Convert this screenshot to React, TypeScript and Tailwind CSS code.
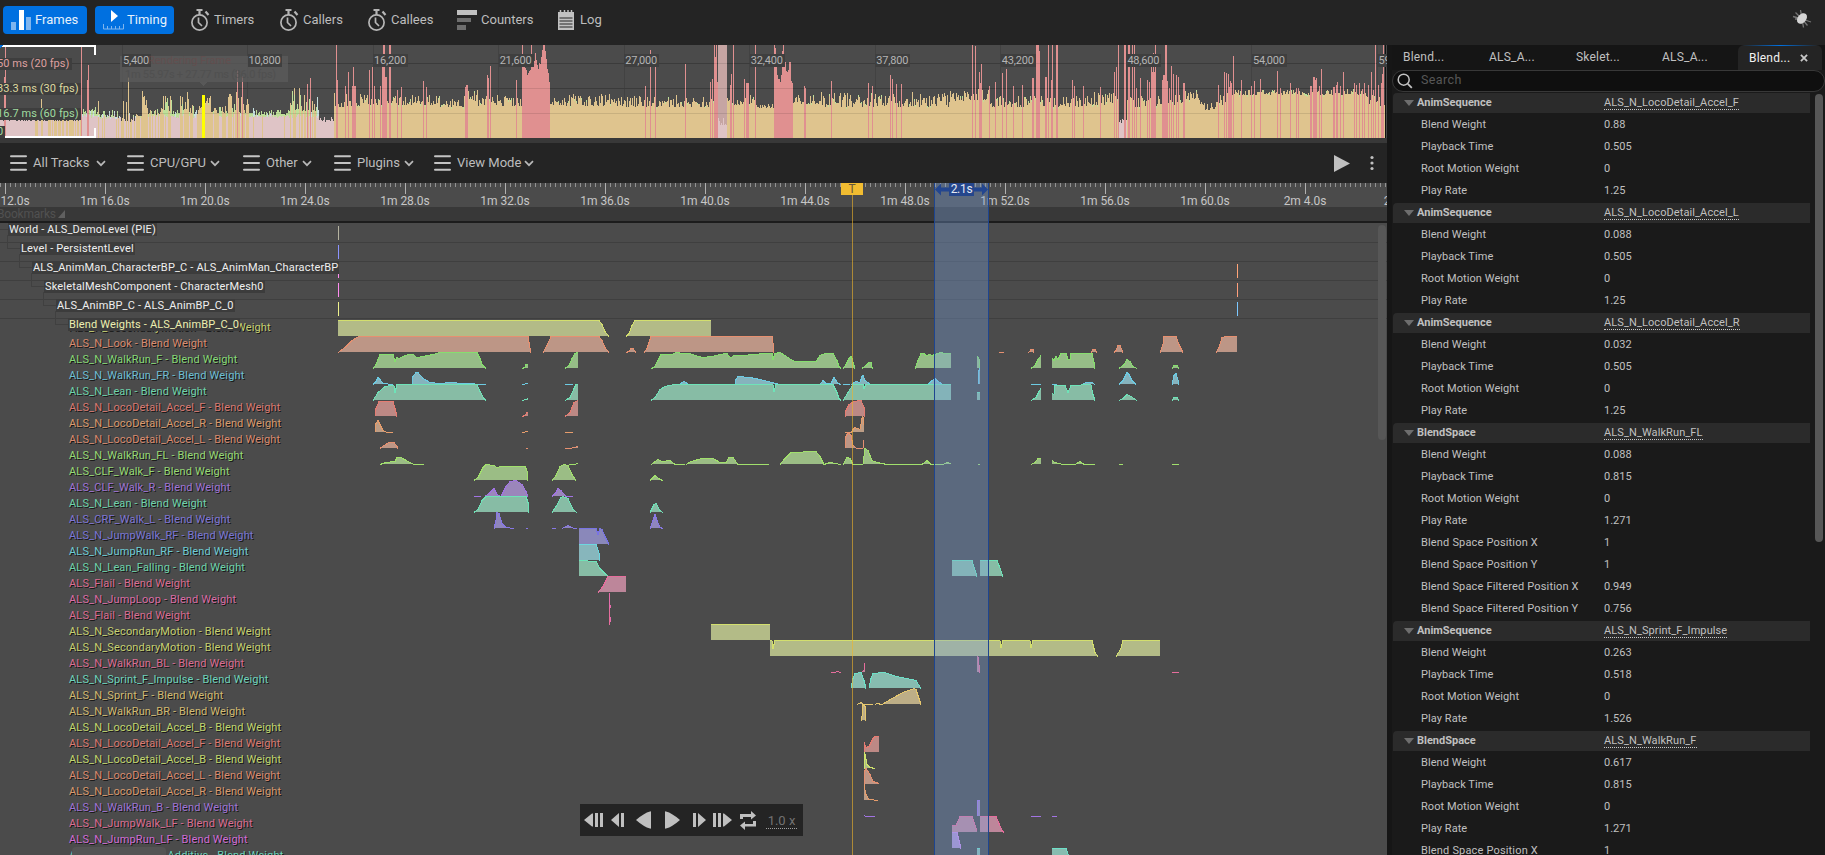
import React from "react";

/* ---------- frame graph ---------- */

const rnd = (n: number) => {
  const s = Math.sin(n * 127.1 + 11.7) * 43758.5453;
  return s - Math.floor(s);
};

const TAN = "#dfc48e";
const ROSE = "#e09090";
const MAUVE = "#dfc4c6";
const LIME = "#bfe09a";
const ICE = "#c6e0e0";

// [from, to, highest y, lowest y, kind]; y is measured from the top of the graph
type Zone = [number, number, number, number, "low" | "mix" | "green" | "tan"];
const zones: Zone[] = [
  [0, 34, 73, 76, "low"],
  [34, 82, 73, 76, "mix"],
  [82, 100, 62, 70, "green"],
  [100, 118, 65, 72, "green"],
  [118, 135, 68, 77, "mix"],
  [135, 142, 64, 71, "mix"],
  [142, 147, 46, 60, "tan"],
  [147, 161, 62, 70, "mix"],
  [161, 172, 50, 68, "mix"],
  [172, 180, 65, 69, "green"],
  [180, 190, 50, 67, "mix"],
  [190, 203, 60, 69, "mix"],
  [203, 211, 51, 58, "tan"],
  [211, 228, 60, 68, "mix"],
  [228, 232, 49, 54, "tan"],
  [232, 250, 52, 68, "mix"],
  [250, 289, 63, 70, "green"],
  [289, 306, 44, 66, "mix"],
  [306, 319, 52, 68, "mix"],
  [319, 334, 71, 77, "low"],
  [334, 345, 54, 62, "tan"],
  [345, 380, 48, 61, "tan"],
  [380, 440, 50, 60, "tan"],
  [440, 464, 53, 62, "tan"],
  [464, 478, 44, 56, "tan"],
  [478, 522, 50, 61, "tan"],
  [522, 560, 52, 60, "tan"],
  [560, 620, 48, 61, "tan"],
  [620, 718, 50, 62, "tan"],
  [718, 727, 72, 80, "low"],
  [727, 755, 50, 60, "tan"],
  [755, 774, 58, 63, "tan"],
  [774, 820, 50, 59, "tan"],
  [820, 950, 47, 62, "tan"],
  [950, 990, 43, 56, "tan"],
  [990, 1090, 50, 62, "tan"],
  [1090, 1119, 46, 60, "tan"],
  [1119, 1127, 68, 78, "low"],
  [1127, 1160, 50, 62, "tan"],
  [1160, 1185, 46, 60, "tan"],
  [1185, 1200, 44, 56, "tan"],
  [1200, 1218, 56, 65, "tan"],
  [1218, 1226, 50, 60, "tan"],
  [1226, 1366, 44, 50, "tan"],
  [1366, 1385, 50, 62, "tan"],
];

// [x, y, width]
const roseBars: [number, number, number][] = [
  [5, 0, 1], [4, 32, 1], [81, 2, 1], [88, 20, 1], [87, 35, 1],
  [237, 25, 1], [242, 31, 1], [310, 33, 1], [307, 39, 1],
  [336, 0, 1], [337, 35, 1], [345, 41, 1], [348, 27, 1], [352, 41, 4], [353, 22, 1],
  [369, 25, 1], [372, 22, 1], [374, 41, 1], [380, 41, 1], [382, 22, 1], [383, 0, 2], [385, 32, 2], [389, 0, 2],
  [397, 45, 1], [401, 42, 1], [423, 36, 1], [426, 42, 1], [465, 42, 1], [466, 40, 2], [487, 30, 1], [488, 33, 1], [490, 21, 1], [516, 35, 1],
  [645, 41, 1], [650, 5, 1], [655, 22, 1], [685, 19, 1], [710, 37, 1], [712, 34, 1], [714, 0, 1], [715, 12, 1], [716, 0, 1], [717, 37, 1],
  [730, 40, 1], [731, 29, 1], [733, 0, 1], [744, 34, 1], [746, 38, 3], [755, 0, 1],
  [804, 41, 1], [805, 43, 1], [831, 36, 1], [868, 38, 1], [872, 41, 1], [890, 30, 1], [892, 34, 1], [896, 39, 1], [901, 39, 1],
  [972, 0, 1], [975, 1, 1], [979, 27, 1], [980, 38, 1], [981, 19, 1], [989, 41, 1], [995, 37, 1], [1002, 28, 1], [1006, 24, 1], [1013, 41, 1], [1022, 40, 1],
  [1032, 33, 2], [1036, 0, 3], [1039, 6, 1], [1045, 32, 2], [1048, 0, 1], [1051, 35, 1], [1052, 0, 1], [1056, 0, 2],
  [1072, 35, 1], [1074, 41, 1], [1083, 41, 1], [1100, 42, 1], [1114, 27, 1], [1116, 22, 1], [1118, 0, 1], [1124, 0, 2], [1128, 0, 2],
  [1132, 0, 1], [1134, 0, 1], [1136, 43, 1], [1140, 33, 1], [1147, 35, 1], [1149, 37, 1], [1151, 22, 1], [1152, 27, 1], [1153, 8, 1], [1154, 27, 1], [1155, 0, 1],
  [1162, 35, 1], [1163, 30, 2], [1165, 0, 2], [1167, 36, 1], [1169, 43, 1], [1171, 21, 1], [1173, 29, 1], [1176, 30, 1], [1178, 32, 1], [1183, 38, 2],
  [1218, 40, 1], [1224, 27, 1], [1226, 28, 1], [1228, 29, 1], [1229, 42, 1], [1230, 36, 1], [1231, 38, 1], [1233, 11, 1], [1241, 35, 1], [1251, 41, 1], [1254, 36, 1], [1260, 34, 1],
  [1277, 26, 1], [1280, 43, 1], [1290, 38, 1], [1296, 43, 1], [1298, 43, 1], [1310, 41, 2], [1313, 32, 2], [1315, 35, 1], [1316, 33, 1], [1319, 41, 1], [1321, 24, 1],
  [1333, 42, 2], [1336, 40, 1], [1337, 37, 1], [1340, 41, 1], [1343, 27, 1], [1354, 38, 1], [1356, 40, 1], [1359, 38, 1], [1362, 44, 1], [1364, 38, 1], [1368, 40, 1],
  [1371, 27, 1], [1373, 45, 1], [1375, 0, 1], [1378, 40, 1], [1381, 38, 1], [1382, 29, 1], [1383, 0, 1],
];

const tanBars: [number, number, number][] = [
  [41, 54, 1], [52, 72, 1], [98, 56, 1], [123, 56, 1], [126, 57, 1], [128, 32, 1], [128, 68, 1], [142, 46, 1], [144, 51, 1],
  [163, 51, 1], [165, 51, 1], [170, 51, 1], [182, 52, 1], [187, 47, 1], [229, 49, 1], [236, 47, 1], [241, 52, 1], [247, 54, 1],
  [294, 43, 1], [299, 43, 1], [334, 48, 1],
];

const crags: { from: number; tops: number[] }[] = [
  {
    from: 522,
    tops: [0, 18, 20, 23, 25, 30, 28, 26, 25, 0, 19, 20, 16, 8, 15, 20, 24, 18, 19, 12, 5, 0, 0, 6, 14, 24, 28, 37],
  },
  { from: 774, tops: [0, 3, 15, 30, 34, 34, 37, 30, 6, 0, 13, 17, 26, 27, 25, 17, 17, 36, 38] },
];

const bar = (x: number, y: number, w = 1, end = 93) => `M${x} ${y}h${w}V${end}h${-w}z`;

function FrameGraph() {
  const d: Record<string, string> = { [TAN]: "", [MAUVE]: "", [LIME]: "", [ICE]: "" };
  zones.forEach(([from, to, hi, lo, kind]) => {
    for (let x = from; x < to; x++) {
      const r = rnd(x);
      const y = Math.round(lo - (lo - hi) * Math.pow(r, 1.7));
      let body = TAN;
      if (kind === "low") body = MAUVE;
      if (kind === "mix") body = rnd(x * 3.3) > 0.45 ? TAN : MAUVE;
      if (kind === "green") body = rnd(x * 5.1) > 0.9 ? TAN : MAUVE;
      d[body] += bar(x, y);
      if (kind === "green" || (kind === "mix" && body === MAUVE && y < 72)) {
        d[rnd(x * 7.7) > 0.8 ? ICE : LIME] += bar(x, y, 1, Math.max(y + 2, 73 - Math.round(rnd(x * 2.9) * 4)));
      } else if (kind === "tan" && rnd(x * 9.1) > 0.88) {
        d[LIME] += bar(x, y, 1, y + 2);
      }
    }
  });
  const rose = roseBars.map(([x, y, w]) => bar(x, y, w)).join("");
  const crag = crags.map((c) => c.tops.map((y, i) => bar(c.from + i, y)).join("")).join("");
  return (
    <svg className="absolute inset-0" width={1387} height={93} shapeRendering="crispEdges">
      <rect width={1387} height={93} fill="#4b4b4b" />
      {[18, 43, 68].map((y) => (
        <rect key={y} x={0} y={y} width={1387} height={1} fill="#424242" />
      ))}
      {Array.from({ length: 11 }, (_, i) => (
        <rect key={i} x={Math.round(121.5 + i * 125.55)} y={0} width={1} height={93} fill="#424242" />
      ))}
      <rect x={718} y={0} width={9} height={93} fill="#c6a5a3" />
      <path d={d[TAN]} fill={TAN} />
      <path d={d[MAUVE]} fill={MAUVE} />
      <path d={tanBars.map(([x, y, w]) => bar(x, y, w)).join("")} fill={TAN} />
      <path d={d[LIME]} fill={LIME} />
      <path d={d[ICE]} fill={ICE} />
      <path d={rose + crag} fill={ROSE} />
      {[18, 43, 68].map((y) => (
        <rect key={y} x={0} y={y} width={1385} height={1} fill="#000" opacity={0.1} />
      ))}
      <rect x={120} y={11} width={168} height={26} fill="#5a5a5a" opacity={0.8} />
      <path d="M200 37h7l-3.5 4z" fill="#585858" />
      <rect x={202} y={50} width={3} height={43} fill="#ffff00" />
      <path d="M2 0h94v10h-2V2H2zM0 93h96V83h-2v8H0z" fill="#ffffff" />
      <path d="M0 0h3l-3 3z" fill="#0070e0" />
      <rect x={1385} y={0} width={1} height={93} fill="#111" />
    </svg>
  );
}

/* ---------- blend weight tracks ---------- */

type Track = { name: string; text: string; line: string; fill: string; curves: string[] };

const hue = {
  yellow: ["#c6d072", "#d3df6e", "#b3bb87"],
  coral: ["#d98b70", "#e69070", "#bd9686"],
  green: ["#86d977", "#86de6e", "#96bd87"],
  cyan: ["#6dbfd4", "#6dcbe3", "#86b3bd"],
  teal: ["#6dd3ab", "#6ee3b8", "#87bca5"],
  red: ["#d97a72", "#e57c72", "#bd8985"],
  orange: ["#d99a6e", "#e69d6c", "#bd9d85"],
  lime: ["#96d976", "#a1e06c", "#9bbd85"],
  violet: ["#9f74d6", "#a274e3", "#9b86bb"],
  indigo: ["#7f76d6", "#8878e6", "#8f86bd"],
  blue: ["#7976d6", "#7974e3", "#8a88ba"],
  sky: ["#6dcbd4", "#6dd7e0", "#87b6bc"],
  rose: ["#d96d93", "#e66d9c", "#bd869a"],
  pink: ["#d96da6", "#e66dab", "#bd869e"],
  mint: ["#6dd3bc", "#6de0c8", "#87bcb0"],
  gold: ["#d1ba72", "#e6c76e", "#bdae87"],
  chartreuse: ["#c0d76f", "#cfe36c", "#adbb87"],
  magenta: ["#cf6dd6", "#c88ae8", "#ad90cd"],
} as const;

const T = (name: string, h: keyof typeof hue, curves: string[] = []): Track => ({
  name,
  text: hue[h][0],
  line: hue[h][1],
  fill: hue[h][2],
  curves,
});

// each curve is a list of "x,weight" pairs, weight running from 0 to 16
const tracks: Track[] = [
  T("ALS_N_SecondaryMotion", "yellow", ["338,16 599,16 602,12 605,5 609,0", "626,0 629,3 632,11 635,16 711,16"]),
  T("ALS_N_Look", "coral", [
    "338,0 345,5 352,12 359,16 528,16 529,10 531,0", "543,0 547,7 551,16 599,16 602,12 605,5 609,0", "626,0 629,1 631,4 633,4 636,0",
    "644,0 647,4 651,16 772,16 773,10 774,0", "999,0 1004,0", "1028,0 1030,1 1031,3 1033,3 1034,0", "1091,0 1093,3 1095,3 1097,0",
    "1114,0 1116,2 1118,7 1120,7 1123,0", "1160,0 1163,8 1164,16 1176,16 1179,8 1183,0", "1216,0 1219,5 1222,15 1226,16 1237,16",
  ]),
  T("ALS_N_WalkRun_F", "green", [
    "373,0 376,4 380,14 393,14 395,7 397,11 399,10 408,14 413,14 417,11 423,12 433,14 440,16 477,16 480,10 482,4 486,0",
    "522,0 525,1 526,4 528,4", "565,0 569,3 572,10 575,15 578,16",
    "651,0 654,1 658,8 661,14 672,14 676,16 683,15 690,15 695,13 703,11 712,12 720,14 727,15 729,12 731,11 734,13 742,13 765,15 772,15 773,9 775,15 780,16 785,13 791,9 795,7 816,7 820,13 825,15 833,15 837,8 839,2 841,0",
    "843,0 846,4 849,10 851,12 852,10 854,3 855,0", "862,0 866,3 869,6 871,6 872,1 873,0",
    "915,0 918,8 921,15 924,15 926,13 930,14 932,13 935,14 938,15 941,16 944,15 951,15", "977,12 979,10 980,0", "1031,0 1035,3 1038,9 1041,13",
    "1052,10 1054,8 1056,12 1058,9 1060,13 1061,15 1066,15 1068,9 1070,9 1071,15 1078,15 1092,15 1094,6 1095,0",
    "1119,0 1124,4 1127,9 1130,7 1133,2 1137,0", "1172,0 1174,3 1177,3 1179,0",
  ]),
  T("ALS_N_WalkRun_FR", "cyan", [
    "373,0 376,3 378,7 380,5 383,1 393,0", "412,0 413,8 416,12 418,12 423,6 430,2 440,1 450,2 463,1 486,0", "522,0 528,1", "565,0 573,0",
    "679,0 684,3 689,0", "735,0 736,5 738,8 750,7 760,5 772,2 780,0", "820,0 823,4 826,1 831,1 834,7 838,1 841,0", "843,0 850,0",
    "851,0 856,3 860,2 862,8 863,9 865,4 868,2 870,0", "928,0 932,4 935,6 938,3 943,0", "978,0 979,14 980,16", "1031,0 1041,0", "1052,0 1057,0",
    "1082,0 1086,2 1092,2 1095,0", "1119,0 1123,4 1127,12 1129,10 1132,4 1136,0", "1172,0 1174,9 1176,11 1178,5 1179,0",
  ]),
  T("ALS_N_Lean", "teal", [
    "373,0 378,8 385,14 392,15 394,15 395,8 397,16 477,16 480,9 484,2 486,0", "522,0 526,1 528,2", "565,0 570,3 574,12 576,16 578,16",
    "651,0 655,3 660,11 665,14 674,16 773,16 774,9 776,16 833,16 837,8 839,2 841,0", "843,0 848,8 853,16 863,16 864,12 866,16 951,16",
    "977,8 980,8", "1031,0 1036,3 1039,9 1041,12", "1052,7 1054,6 1055,15 1065,15 1068,8 1071,15 1091,16 1093,6 1095,0",
    "1119,0 1123,2 1127,6 1131,4 1137,0", "1172,0 1174,3 1177,3 1179,0",
  ]),
  T("ALS_N_LocoDetail_Accel_F", "red", [
    "375,0 376,8 379,15 393,15 395,8 397,0", "522,0 525,1 527,4 528,4", "565,0 570,4 574,14 578,16", "845,0 845,4 849,12 854,15 861,16 864,9 864,0",
  ]),
  T("ALS_N_LocoDetail_Accel_R", "orange", [
    "375,0 376,9 378,12 380,8 383,2 387,0 393,0", "522,0 528,1", "565,0 573,0", "845,0 851,0 853,3 855,5 860,3 862,14 863,16 864,8",
  ]),
  T("ALS_N_LocoDetail_Accel_L", "coral", ["380,0 384,3 389,6 394,6 397,2 397,0", "526,0 528,0", "565,0 570,0 578,2", "845,0 846,12 848,16 851,13 853,3 857,0 863,0 864,8"]),
  T("ALS_N_WalkRun_FL", "lime", [
    "380,0 386,2 395,3 397,7 401,7 408,3 414,0 424,0", "651,0 654,2 658,5 662,3 670,4 675,0 685,0", "686,0 691,3 702,6 713,6 720,2 726,2 729,7 733,7 738,0 769,0",
    "780,0 785,6 791,12 816,13 820,8 824,0 830,2 841,0", "843,0 847,7 850,6 853,0 863,0 865,16 868,14 872,4 877,2 887,0 922,0 927,4 931,0 943,0 947,2 951,1",
    "978,0 980,0", "1031,0 1035,2 1038,6 1041,6", "1052,4 1055,2 1063,0 1075,0 1080,3 1084,0 1095,0", "1119,0 1123,0", "1172,0 1179,0",
  ]),
  T("ALS_CLF_Walk_F", "lime", [
    "474,0 478,3 483,13 486,16 494,15 497,13 502,14 525,14 527,10 528,0", "552,0 556,5 560,14 564,16 568,15 572,6 576,0", "569,16 578,16.6", "650,0 655,5 660,1 663,0",
  ]),
  T("ALS_CLF_Walk_R", "violet", ["474,0 481,0", "485,0 490,4 494,8 497,2 501,0 506,10 510,15 516,16 522,12 526,5 528,0", "552,0 556,4 558,8 561,6 566,0 573,0"]),
  T("ALS_N_Lean", "teal", ["474,0 478,3 482,12 486,16 526,16 528,10 528,0", "552,0 556,6 561,15 563,16 568,14 573,3 577,0", "650,0 654,8 656,9 660,2 663,0"]),
  T("ALS_CRF_Walk_L", "indigo", ["494,0 496,8 497,16 499,15 502,5 506,1 514,0", "526,0 528,0", "552,0 556,0", "562,0 568,3 574,0 577,0", "650,0 653,8 655,14 657,8 660,1 663,0"]),
  T("ALS_N_JumpWalk_RF", "blue", ["579,16 596,16 598,10 600,16 602,15 605,8 609,0"]),
  T("ALS_N_JumpRun_RF", "sky", ["579,16 596,16 599,8 600,0"]),
  T("ALS_N_Lean_Falling", "teal", ["579,16 596,15 600,8 605,3 609,0", "952,16 972,16 977,0", "980,16 997,16 999,11 1003,0"]),
  T("ALS_Flail", "rose", ["598,0 603,6 608,16 626,16"]),
  T("ALS_N_JumpLoop", "pink", ["609,16 610,0"]),
  T("ALS_Flail", "rose", ["609,16 610,0"]),
  T("ALS_N_SecondaryMotion", "yellow", ["711,16 770,16"]),
  T("ALS_N_SecondaryMotion", "yellow", [
    "770,16 772,16 773,8 775,16 1000,16 1001,9 1003,16 1030,16 1031,9 1033,16 1092,16 1095,4 1098,0", "1116,0 1121,8 1123,16 1160,16",
  ]),
  T("ALS_N_WalkRun_BL", "rose", ["831,0 835,0 837,1 841,0", "861,0 864,2 865,9", "977,16 978,16 980,0", "1172,0 1179,0"]),
  T("ALS_N_Sprint_F_Impulse", "mint", ["851,0 853,10 855,15 861,16 864,8 866,0", "869,0 871,10 873,15 884,16 897,12 916,8 921,0"]),
  T("ALS_N_Sprint_F", "gold", ["857,0 861,2 864,0 873,0", "875,0 877,1 882,0 892,6 903,12 914,16 916,15 918,9 921,0"]),
  T("ALS_N_WalkRun_BR", "gold", ["861,0 862,4 863,16 865,14 866,0"]),
  T("ALS_N_LocoDetail_Accel_B", "chartreuse"),
  T("ALS_N_LocoDetail_Accel_F", "red", ["864,0 864,10 866,5 869,6 873,14 875,16 879,16"]),
  T("ALS_N_LocoDetail_Accel_B", "chartreuse", ["864,0 864,16 865,14 867,4 870,1 875,0"]),
  T("ALS_N_LocoDetail_Accel_L", "coral", ["864,0 864,12 866,16 870,10 873,3 879,1"]),
  T("ALS_N_LocoDetail_Accel_R", "orange", ["864,16 866,6 869,1 878,0"]),
  T("ALS_N_WalkRun_B", "violet", ["864,1 866,0 875,0", "977,0 978,16 980,16", "1031,0 1041,0", "1052,0 1057,0"]),
  T("ALS_N_JumpWalk_LF", "rose", ["952,7 956,7 960,16 972,16 977,2", "980,16 996,16 1002,2 1004,0"]),
  T("ALS_N_JumpRun_LF", "magenta", ["952,16 957,16 959,8 961,0"]),
  T("ALS_N_Land_Light_Additive", "mint", ["977,16 980,16", "1052,16 1066,16 1069,8 1070,0"]),
];

const TRACKS_TOP = 223;

function TrackCurves() {
  return (
    <svg className="absolute inset-0" width={1387} height={632} shapeRendering="crispEdges">
      {[242, 261, 280, 299, 318].map((y) => (
        <rect key={y} x={0} y={y - TRACKS_TOP} width={1387} height={1} fill="#3f3f3f" />
      ))}
      <path
        d="M0 6.5H8M7.5 12V25.500H20M19.500 31V44.500H32M31.500 50V63.500H44M43.500 69V82.500H56M55.500 88V101.500H68"
        fill="none"
        stroke="#404040"
      />
      <rect x={338} y={3} width={1} height={14} fill="#b5b3a0" />
      <rect x={338} y={22} width={1} height={14} fill="#8c93ff" />
      <rect x={338} y={41} width={1} height={14} fill="#ff8cf0" />
      <rect x={338} y={60} width={1} height={14} fill="#ff8cf0" />
      <rect x={338} y={79} width={1} height={14} fill="#eef28c" />
      <rect x={1237} y={41} width={1} height={14} fill="#ffa478" />
      <rect x={1237} y={60} width={1} height={14} fill="#ff9f7c" />
      <rect x={1237} y={79} width={1} height={14} fill="#7cc8ff" />
      {tracks.map((t, row) => {
        const base = 320 - TRACKS_TOP + 16 * (row + 1);
        return t.curves.map((c, k) => {
          const pts = c.split(" ").map((p) => p.split(",").map(Number));
          const x0 = pts[0][0];
          const x1 = pts[pts.length - 1][0];
          const line = pts.map(([x, h]) => `${x},${base - h + 0.5}`).join(" ");
          const flat = pts.every(([, h]) => h < 1);
          const high = pts.every(([, h]) => h >= 16) && x1 < 579 && row === 9;
          return (
            <g key={`${row}-${k}`}>
              {!flat && !high && <polygon points={`${x0},${base} ${line} ${x1},${base}`} fill={t.fill} />}
              <polyline points={line} fill="none" stroke={t.line} strokeWidth={1} />
            </g>
          );
        });
      })}
      <path d="M610 382h1v3h-1zM610 394h1v5h-1z" fill="#e66dab" />
    </svg>
  );
}

/* ---------- toolbar icons ---------- */

const Stopwatch = () => (
  <svg width={19} height={24} viewBox="0 0 19 24" fill="none" stroke="#b6b6b6">
    <circle cx={8.500} cy={14.500} r={7.600} strokeWidth={1.700} />
    <path d="M5.500 2h6" strokeWidth={2} />
    <path d="M8.500 3v4" strokeWidth={2.200} />
    <path d="M14.500 3.500l3 3.500" strokeWidth={2.200} />
    <path d="M7.500 9.500v5l3.500 3.500" strokeWidth={1.700} />
  </svg>
);

const FramesIcon = () => (
  <svg width={20} height={20} viewBox="0 0 20 20">
    <rect x={0} y={12} width={5} height={8} fill="#7fb5ee" />
    <rect x={8} y={0} width={5} height={20} fill="#fff" />
    <rect x={15} y={7} width={5} height={13} fill="#7fb5ee" />
  </svg>
);

const TimingIcon = () => (
  <svg width={21} height={20} viewBox="0 0 21 20">
    <path d="M8 0l7 6-7 6z" fill="#fff" />
    <path d="M.5 14v5h20v-5M4.500 16v3M8.500 16v3M12.500 16v3M16.500 16v3" fill="none" stroke="#7fb5ee" />
  </svg>
);

const CountersIcon = () => (
  <svg width={20} height={20} viewBox="0 0 20 20">
    <rect width={20} height={5} fill="#c0c0c0" />
    <rect y={8} width={14} height={4} fill="#6e6e6e" />
    <rect y={15} width={9} height={5} fill="#6e6e6e" />
  </svg>
);

const LogIcon = () => (
  <svg width={16} height={20} viewBox="0 0 16 20">
    <path d="M0 2h16v18H0z" fill="#c0c0c0" />
    <path d="M2.500 0v4M6.500 0v4M10 0v4M13.500 0v4" stroke="#c0c0c0" strokeWidth={1.500} />
    <path d="M1.500 8h13M1.500 11h13M1.500 14h13M1.500 17h13" stroke="#242424" strokeWidth={1.200} />
  </svg>
);

const BugIcon = () => (
  <svg width={20} height={20} viewBox="0 0 20 20" fill="none" stroke="#777" strokeWidth={1.300}>
    <path d="M10 10L1 7.500M10 10L3.500 3.500M10 10L8.500 1M10 10l9 3M10 10l5.500 6.500M10 10l1.500 8.500M10 10H3" />
    <ellipse cx={10} cy={9.500} rx={4.200} ry={6} transform="rotate(40 10 9.500)" fill="#d4d4d4" stroke="none" />
  </svg>
);

const Burger = () => (
  <svg width={17} height={16} viewBox="0 0 17 16">
    <path d="M1 1.200h15M1 8h15M1 14.800h15" stroke="#c4c4c4" strokeWidth={2} strokeLinecap="round" />
  </svg>
);

const Chevron = () => (
  <svg width={10} height={7} viewBox="0 0 10 7">
    <path d="M1 1.200l4 4 4-4" fill="none" stroke="#b8b8b8" strokeWidth={1.700} />
  </svg>
);

/* ---------- header ---------- */

function Header() {
  return (
    <header className="flex h-[45px] shrink-0 items-start bg-[#242424] pt-1.5 pl-[3px] text-[13px] leading-7 text-[#bdbdbd]">
      <button className="flex h-7 w-[84px] items-center gap-1 rounded bg-[#0070e0] pl-2 text-[#e6f0fb]">
        <FramesIcon />
        Frames
      </button>
      <button className="ml-2 flex h-7 w-[79px] items-center gap-[3px] rounded bg-[#0070e0] pl-2 text-[#e6f0fb]">
        <TimingIcon />
        Timing
      </button>
      <div className="flex w-[89px] items-center gap-1 pl-[17px]">
        <Stopwatch />
        Timers
      </div>
      <div className="flex w-[88px] items-center gap-1 pl-[17px]">
        <Stopwatch />
        Callers
      </div>
      <div className="flex w-[90px] items-center gap-1 pl-[17px]">
        <Stopwatch />
        Callees
      </div>
      <div className="flex w-[102px] items-center gap-1 pl-4">
        <CountersIcon />
        Counters
      </div>
      <div className="flex items-center gap-[6px] pl-[15px]">
        <LogIcon />
        Log
      </div>
      <div className="mr-[13px] ml-auto pt-[3px]">
        <BugIcon />
      </div>
    </header>
  );
}

/* ---------- left side ---------- */

function FramesPanel() {
  return (
    <section className="relative h-[93px] shrink-0 overflow-hidden text-[11px] leading-3">
      <FrameGraph />
      <div className="relative flex pt-[10px] pl-[122px] text-[#b4b4b4]">
        {["5,400", "10,800", "16,200", "21,600", "27,000", "32,400", "37,800", "43,200", "48,600", "54,000", "59,400"].map((n) => (
          <div key={n} className="w-[125.550px] shrink-0">
            <span className="bg-[#3f3f3f] pr-[2px] pl-px tracking-[-0.200px]">{n}</span>
          </div>
        ))}
      </div>
      <div className="absolute top-[10px] left-[125px] w-[160px] text-[#4c4c4c] opacity-60">
        <div className="pl-[23px] text-[#6a4a4a]">Rendering Frame</div>
        <div className="pt-[2px] tracking-tight whitespace-nowrap">1m 55.97s + 27.77 ms (36.0 fps)</div>
      </div>
      <div className="absolute top-[13px] left-[-3px] flex flex-col items-start gap-[13px] whitespace-nowrap">
        <span className="bg-[#3e3e3e] pr-[2px] tracking-[0.070px] text-[#dfa0a0]">50 ms (20 fps)</span>
        <span className="bg-[#3e3e3e] pr-[2px] tracking-[0.070px] text-[#dedba0]">33.3 ms (30 fps)</span>
        <span className="bg-[#3e3e3e] pr-[2px] tracking-[0.070px] text-[#a0dca0]">16.7 ms (60 fps)</span>
        <span className="-mt-[7px] bg-[#3e3e3e] pr-[2px] text-[#a0dca0]">0</span>
      </div>
    </section>
  );
}

function TrackMenus() {
  return (
    <nav className="mt-[5px] flex h-10 shrink-0 items-center bg-[#242424] pl-[10px] text-[13px] text-[#bdbdbd]">
      <div className="flex w-[117px] items-center gap-1.5">
        <Burger />
        <span className="-mr-px w-[58px] whitespace-nowrap">All Tracks</span>
        <Chevron />
      </div>
      <div className="flex w-[116px] items-center gap-1.5">
        <Burger />
        <span className="-mr-[2px] w-[56px] whitespace-nowrap">CPU/GPU</span>
        <Chevron />
      </div>
      <div className="flex w-[91px] items-center gap-1.5">
        <Burger />
        <span className="-mr-px w-[31px] whitespace-nowrap">Other</span>
        <Chevron />
      </div>
      <div className="flex w-[100px] items-center gap-1.5">
        <Burger />
        <span className="-mr-px w-[42px] whitespace-nowrap">Plugins</span>
        <Chevron />
      </div>
      <div className="flex items-center gap-1.5">
        <Burger />
        <span className="-mr-[2px] w-[63px] whitespace-nowrap">View Mode</span>
        <Chevron />
      </div>
      <svg className="ml-auto" width={16} height={17} viewBox="0 0 16 17">
        <path d="M0 0l16 8.500L0 17z" fill="#c0c0c0" />
      </svg>
      <svg className="mr-[13px] ml-[20px]" width={4} height={16} viewBox="0 0 4 16">
        <circle cx={2} cy={2.500} r={1.600} fill="#c0c0c0" />
        <circle cx={2} cy={8} r={1.600} fill="#c0c0c0" />
        <circle cx={2} cy={13.500} r={1.600} fill="#c0c0c0" />
      </svg>
    </nav>
  );
}

const times = ["1m 12.0s", "1m 16.0s", "1m 20.0s", "1m 24.0s", "1m 28.0s", "1m 32.0s", "1m 36.0s", "1m 40.0s", "1m 44.0s", "1m 48.0s", "1m 52.0s", "1m 56.0s", "1m 60.0s", "2m 4.0s", "2m 8.0s"];

function Ruler() {
  return (
    <div className="relative h-6 shrink-0 overflow-hidden bg-[#4b4b4b]">
      <svg className="absolute inset-0" width={1387} height={24} shapeRendering="crispEdges">
        {Array.from({ length: 278 }, (_, i) => (
          <rect key={i} x={i * 5} y={0} width={1} height={i % 20 === 1 ? 11 : 4} fill={i % 20 === 1 ? "#b0b0b0" : "#939393"} />
        ))}
      </svg>
      <div className="relative -ml-[45px] flex pt-[10.500px] text-[12px] leading-[14px] text-[#c6c6c6]">
        {times.map((t) => (
          <span key={t} className="w-[100px] shrink-0 text-center tracking-[-0.060px]">
            {t}
          </span>
        ))}
      </div>
    </div>
  );
}

const objects = [
  ["World - ALS_DemoLevel (PIE)", "ml-[8px]"],
  ["Level - PersistentLevel", "ml-[20px]"],
  ["ALS_AnimMan_CharacterBP_C - ALS_AnimMan_CharacterBP", "ml-[32px]"],
  ["SkeletalMeshComponent - CharacterMesh0", "ml-[44px]"],
  ["ALS_AnimBP_C - ALS_AnimBP_C_0", "ml-[56px]"],
];

function TrackList() {
  return (
    <div className="relative h-[632px] shrink-0 overflow-hidden bg-[#4b4b4b]">
      <TrackCurves />
      <div className="relative flex flex-col items-start text-[11px] whitespace-nowrap">
        {objects.map(([label, indent]) => (
          <div key={label} className={`${indent} mb-[6px] h-[13px] bg-[#3c3c3c] px-px pt-px text-[#efefef]`}>
            <span className="block leading-3 tracking-[0.165px]">{label}</span>
          </div>
        ))}
        <div className="relative z-10 ml-[68px] h-[13px] bg-[#3c3c3c] px-px pt-px leading-3 tracking-[0.150px] text-[#ecefb0]">
          Blend Weights - ALS_AnimBP_C_0
        </div>
        <div className="-mt-[11px] ml-[69px]">
          {tracks.map((t, i) => (
            <div key={i} className="h-4 leading-4 tracking-[0.150px] [text-shadow:1px_1px_0_#151515]" style={{ color: t.text }}>
              {t.name} - Blend Weight
            </div>
          ))}
        </div>
      </div>
      <div className="absolute top-[2px] right-[1px] h-[215px] w-2 rounded-full bg-[#575757]" />
      <div className="absolute bottom-0 left-[72px] h-2 w-[94px] rounded-t bg-[#545454]" />
    </div>
  );
}

function Transport() {
  return (
    <div className="absolute top-[759px] left-[580px] flex h-8 w-[223px] items-center bg-[#242424] pl-1">
      <svg width={176} height={20} viewBox="0 0 176 20" fill="#c0c0c0">
        <path d="M0 10l8-6.500v13zM8 3.500h1v13H8zM11 3h3v14h-3zM16 3h3v14h-3z" />
        <path d="M27 10l8-7v14zM37 3h3v14h-3z" />
        <path d="M52 10Q60 3 66 1.500Q67 1 67 2V18Q67 19 66 18.500Q60 17 52 10z" />
        <path d="M96 10Q88 3 82 1.500Q81 1 81 2V18Q81 19 82 18.500Q88 17 96 10z" />
        <path d="M109 3h3v14h-3zM114 3l8 7-8 7z" />
        <path d="M129 3h3v14h-3zM134 3h3v14h-3zM139 3.500h1l8 6.500-8 6.500h-1z" />
        <path d="M156 9V4h11V1l5 4.500-5 4V7h-8v2zM172 11v5.500h-11V20l-5-4.500 5-4v2.500h8v-3z" />
      </svg>
      <span className="ml-[6px] w-[31px] border-b border-dotted border-[#a0a0a0] pt-px text-center text-[13px] leading-[15px] text-[#727272]">1.0 x</span>
    </div>
  );
}

function TimeSelection() {
  return (
    <>
      <div className="absolute top-[138px] left-[934px] h-[672px] w-[55px] border-x border-[#1e4590] bg-[#7ba2e0]/35">
        <svg width={53} height={14} viewBox="0 0 53 14">
          <path d="M0 6.500l6-6v4h41v-4l6 6-6 6v-4H6v4z" fill="#234690" />
        </svg>
        <span className="absolute top-0 left-[14px] h-[13px] w-[25px] bg-[#25468c] text-center text-[12px] leading-[13px] tracking-tight text-[#e4e9f2]">2.1s</span>
      </div>
      <div className="absolute top-[150px] left-[852px] h-[660px] w-px bg-[#efb42a]/60" />
      <div className="absolute top-[138px] left-[841px] h-3 w-[22px] bg-[#f1bc31] text-center text-[12px] leading-[13px] text-[#66573a]">T</div>
    </>
  );
}

/* ---------- details panel ---------- */

type Item = { kind: string; asset: string; props: [string, string][] };

const basic = (weight: string, time: string, rate: string): [string, string][] => [
  ["Blend Weight", weight],
  ["Playback Time", time],
  ["Root Motion Weight", "0"],
  ["Play Rate", rate],
];

const items: Item[] = [
  { kind: "AnimSequence", asset: "ALS_N_LocoDetail_Accel_F", props: basic("0.88", "0.505", "1.25") },
  { kind: "AnimSequence", asset: "ALS_N_LocoDetail_Accel_L", props: basic("0.088", "0.505", "1.25") },
  { kind: "AnimSequence", asset: "ALS_N_LocoDetail_Accel_R", props: basic("0.032", "0.505", "1.25") },
  {
    kind: "BlendSpace",
    asset: "ALS_N_WalkRun_FL",
    props: [
      ...basic("0.088", "0.815", "1.271"),
      ["Blend Space Position X", "1"],
      ["Blend Space Position Y", "1"],
      ["Blend Space Filtered Position X", "0.949"],
      ["Blend Space Filtered Position Y", "0.756"],
    ],
  },
  { kind: "AnimSequence", asset: "ALS_N_Sprint_F_Impulse", props: basic("0.263", "0.518", "1.526") },
  {
    kind: "BlendSpace",
    asset: "ALS_N_WalkRun_F",
    props: [...basic("0.617", "0.815", "1.271"), ["Blend Space Position X", "1"]],
  },
];

function Details() {
  return (
    <aside className="flex w-[433px] flex-col bg-[#1a1a1a] text-[#c0c0c0]">
      <div className="flex h-[25px] shrink-0 bg-[#151515] pl-[11px] text-[12px] leading-6 tracking-[0.200px]">
        <span className="w-[86px]">Blend...</span>
        <span className="w-[87px]">ALS_A...</span>
        <span className="w-[86px]">Skelet...</span>
        <span className="w-[76px]">ALS_A...</span>
        <div className="relative flex w-[84px] items-center rounded-t-md bg-[#242424] pl-[11px] text-[#f2f2f2]">
          Blend...
          <svg className="ml-[10px]" width={8} height={8} viewBox="0 0 7 7">
            <path d="M.8.8l5.400 5.400M6.200.8L.8 6.200" stroke="#c8c8c8" strokeWidth={1.600} />
          </svg>
          <div className="absolute inset-x-1 top-0 h-px bg-linear-to-r from-transparent via-[#0070e0] to-transparent" />
        </div>
      </div>
      <div className="flex h-[22px] shrink-0 items-center rounded-full border border-[#383838] bg-[#0f0f0f] pl-1">
        <svg width={16} height={16} viewBox="0 0 16 16" fill="none" stroke="#c4c4c4">
          <circle cx={6.700} cy={6.700} r={5.500} strokeWidth={1.500} />
          <path d="M10.800 10.800l4 4" strokeWidth={1.800} />
        </svg>
        <span className="-mt-[2px] ml-[8px] text-[12.500px] tracking-[0.400px] text-[#575757]">Search</span>
      </div>
      <div className="relative min-h-0 flex-1 overflow-hidden pt-px text-[11px]">
        {items.map((it) => (
          <div key={it.asset} className="ml-px w-[417px]">
            <div className="mb-[2px] flex h-5 items-center rounded-tl bg-[#2b2b2b] pl-[11px]">
              <svg width={10} height={6} viewBox="0 0 10 6">
                <path d="M0 0h10L5 6z" fill="#6e6e6e" />
              </svg>
              <b className="ml-[3px] w-[187px] font-bold">{it.kind}</b>
              <span className="border-b border-dotted border-[#c8c8c8] leading-3 tracking-[0.090px]">{it.asset}</span>
            </div>
            {it.props.map(([k, v]) => (
              <div key={k} className="flex h-[22px] pl-7 leading-5">
                <span className={k.startsWith("Blend Space") ? "w-[183px] tracking-[0.170px]" : "w-[183px] tracking-[0.070px]"}>{k}</span>
                <span>{v}</span>
              </div>
            ))}
          </div>
        ))}
        <div className="absolute top-[2px] right-[2px] h-[448px] w-2 rounded-full bg-[#575757]" />
      </div>
    </aside>
  );
}

export default function App() {
  return (
    <div className="flex h-[855px] w-[1825px] flex-col overflow-hidden bg-[#161616] font-['Roboto','Liberation_Sans',sans-serif]">
      <Header />
      <main className="flex min-h-0 flex-1 gap-[5px]">
        <div className="relative flex w-[1387px] flex-col overflow-hidden bg-[#383838]">
          <FramesPanel />
          <TrackMenus />
          <Ruler />
          <div className="flex h-4 shrink-0 items-center border-b-2 border-[#1c1c1c] text-[12px] leading-[14px] text-[#515151]">
            <span className="-ml-[3px] tracking-[-0.200px]">Bookmarks</span>
            <svg className="ml-[2px]" width={7} height={8} viewBox="0 0 7 8">
              <path d="M7 0v8H0z" fill="#606060" />
            </svg>
          </div>
          <TrackList />
          <TimeSelection />
          <Transport />
        </div>
        <Details />
      </main>
    </div>
  );
}
